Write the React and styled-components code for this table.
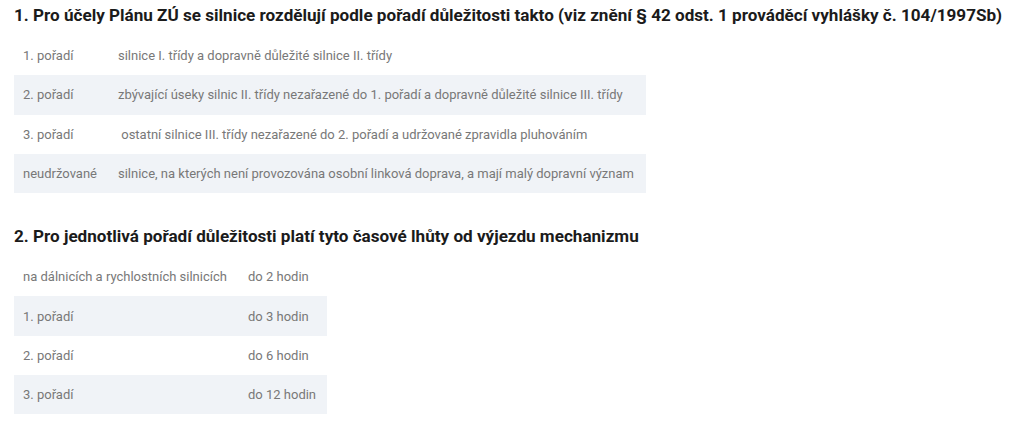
import React from 'react'
import styled, { createGlobalStyle } from 'styled-components'

const Global = createGlobalStyle`
    body {
        margin: 0;
        background: #fff;
        font-family: Roboto, "Noto Sans", sans-serif;
    }
`

const Page = styled.div`
    padding: 5px 14px 0;
`

const Heading = styled.h3`
    margin: ${p => p.$top || 0}px 0 0;
    font-size: 17.1px;
    line-height: 20px;
    font-weight: 700;
    color: #1b1b1b;
    white-space: nowrap;
`

const Table = styled.table`
    margin-top: ${p => p.$top}px;
    width: ${p => p.$width}px;
    border-collapse: collapse;
    table-layout: fixed;
`

const Row = styled.tr`
    height: ${p => p.$h}px;
    background: ${p => (p.$odd ? '#f0f3f7' : 'transparent')};
`

const Cell = styled.td`
    width: ${p => (p.$w ? p.$w + 'px' : 'auto')};
    padding: 0 0 0 9px;
    font-size: 13px;
    color: #787878;
    white-space: pre;
    vertical-align: middle;
`

const order = [
    ['1. pořadí', 'silnice I. třídy a dopravně důležité silnice II. třídy'],
    ['2. pořadí', 'zbývající úseky silnic II. třídy nezařazené do 1. pořadí a dopravně důležité silnice III. třídy'],
    ['3. pořadí', ' ostatní silnice III. třídy nezařazené do 2. pořadí a udržované zpravidla pluhováním'],
    ['neudržované', 'silnice, na kterých není provozována osobní linková doprava, a mají malý dopravní význam'],
]

const limits = [
    ['na dálnicích a rychlostních silnicích', 'do 2 hodin'],
    ['1. pořadí', 'do 3 hodin'],
    ['2. pořadí', 'do 6 hodin'],
    ['3. pořadí', 'do 12 hodin'],
]

const App = () => {
    return (
        <Page>
            <Global />
            <Heading>1. Pro účely Plánu ZÚ se silnice rozdělují podle pořadí důležitosti takto (viz znění § 42 odst. 1 prováděcí vyhlášky č. 104/1997Sb)</Heading>
            <Table $top={11} $width={632}>
                <tbody>
                    {order.map((r, i) => (
                        <Row key={i} $odd={i % 2 === 1} $h={39.3}>
                            <Cell $w={86}>{r[0]}</Cell>
                            <Cell>{r[1]}</Cell>
                        </Row>
                    ))}
                </tbody>
            </Table>
            <Heading $top={33}>2. Pro jednotlivá pořadí důležitosti platí tyto časové lhůty od výjezdu mechanizmu</Heading>
            <Table $top={11} $width={313}>
                <tbody>
                    {limits.map((r, i) => (
                        <Row key={i} $odd={i % 2 === 1} $h={39.3}>
                            <Cell $w={216}>{r[0]}</Cell>
                            <Cell>{r[1]}</Cell>
                        </Row>
                    ))}
                </tbody>
            </Table>
        </Page>
    )
}

export default App
